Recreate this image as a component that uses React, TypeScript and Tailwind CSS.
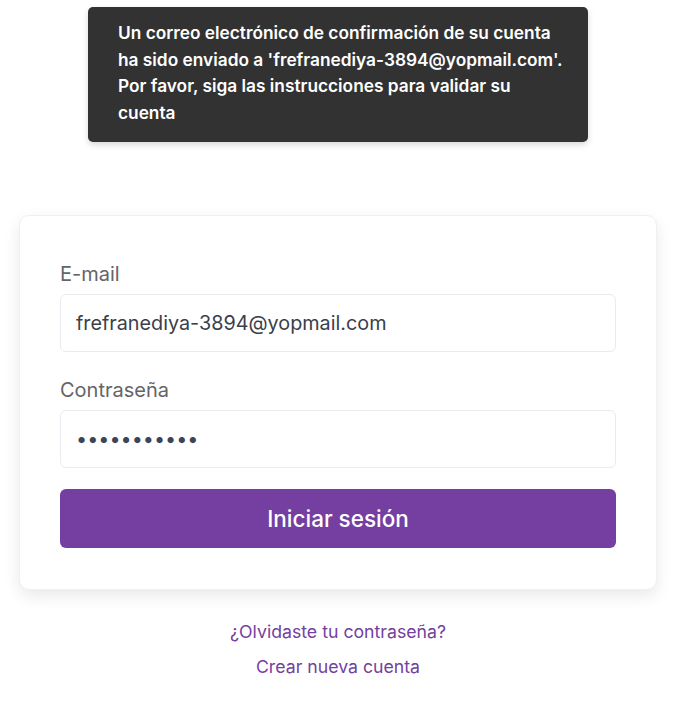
import React from 'react'

export default function App() {
  return (
    <div
      className="min-h-[714px] bg-white pt-[7px]"
      style={{ fontFamily: 'Inter, "Noto Sans", sans-serif' }}
    >
      {/* Aviso de confirmación */}
      <div className="ml-[88px] w-[500px] whitespace-nowrap rounded-[5px] bg-[#323232] px-[30px] pt-[13px] pb-[16px] text-[17.3px] leading-[26.5px] font-semibold text-white shadow-[0_3px_6px_rgba(0,0,0,0.15)]">
        Un correo electrónico de confirmación de su cuenta
        <br />
        ha sido enviado a 'frefranediya-3894@yopmail.com'.
        <br />
        Por favor, siga las instrucciones para validar su
        <br />
        cuenta
      </div>

      {/* Tarjeta de login */}
      <div className="ml-[19px] mt-[73px] w-[638px] rounded-[10px] border border-[#eef0f3] bg-white px-[40px] pt-[45px] pb-[41px] shadow-[0_6px_16px_rgba(0,0,0,0.09)]">
        <label className="block text-[20px] leading-[27px] text-[#646469]">E-mail</label>
        <input
          readOnly
          value="frefranediya-3894@yopmail.com"
          className="mt-[6px] block h-[58px] w-full rounded-[6px] border border-[#e8ebef] px-[15px] text-[19.8px] text-[#3a3f4b] outline-none"
        />

        <label className="mt-[25px] block text-[20px] leading-[27px] text-[#646469]">Contraseña</label>
        <input
          readOnly
          type="password"
          value="abcdefghijk"
          className="mt-[6px] block h-[58px] w-full rounded-[6px] border border-[#e8ebef] px-[15px] text-[19.8px] text-[#3a4556] outline-none"
        />

        <button className="mt-[21px] flex h-[59px] w-full items-center justify-center rounded-[6px] bg-[#743fa0] text-[22.5px] font-medium text-white">
          Iniciar sesión
        </button>
      </div>

      {/* Enlaces */}
      <div className="mt-[29px] flex flex-col items-center gap-[9px] pr-[5px] text-[17.7px] leading-[26px] text-[#74409f]">
        <a href="#">¿Olvidaste tu contraseña?</a>
        <a href="#">Crear nueva cuenta</a>
      </div>
    </div>
  )
}
